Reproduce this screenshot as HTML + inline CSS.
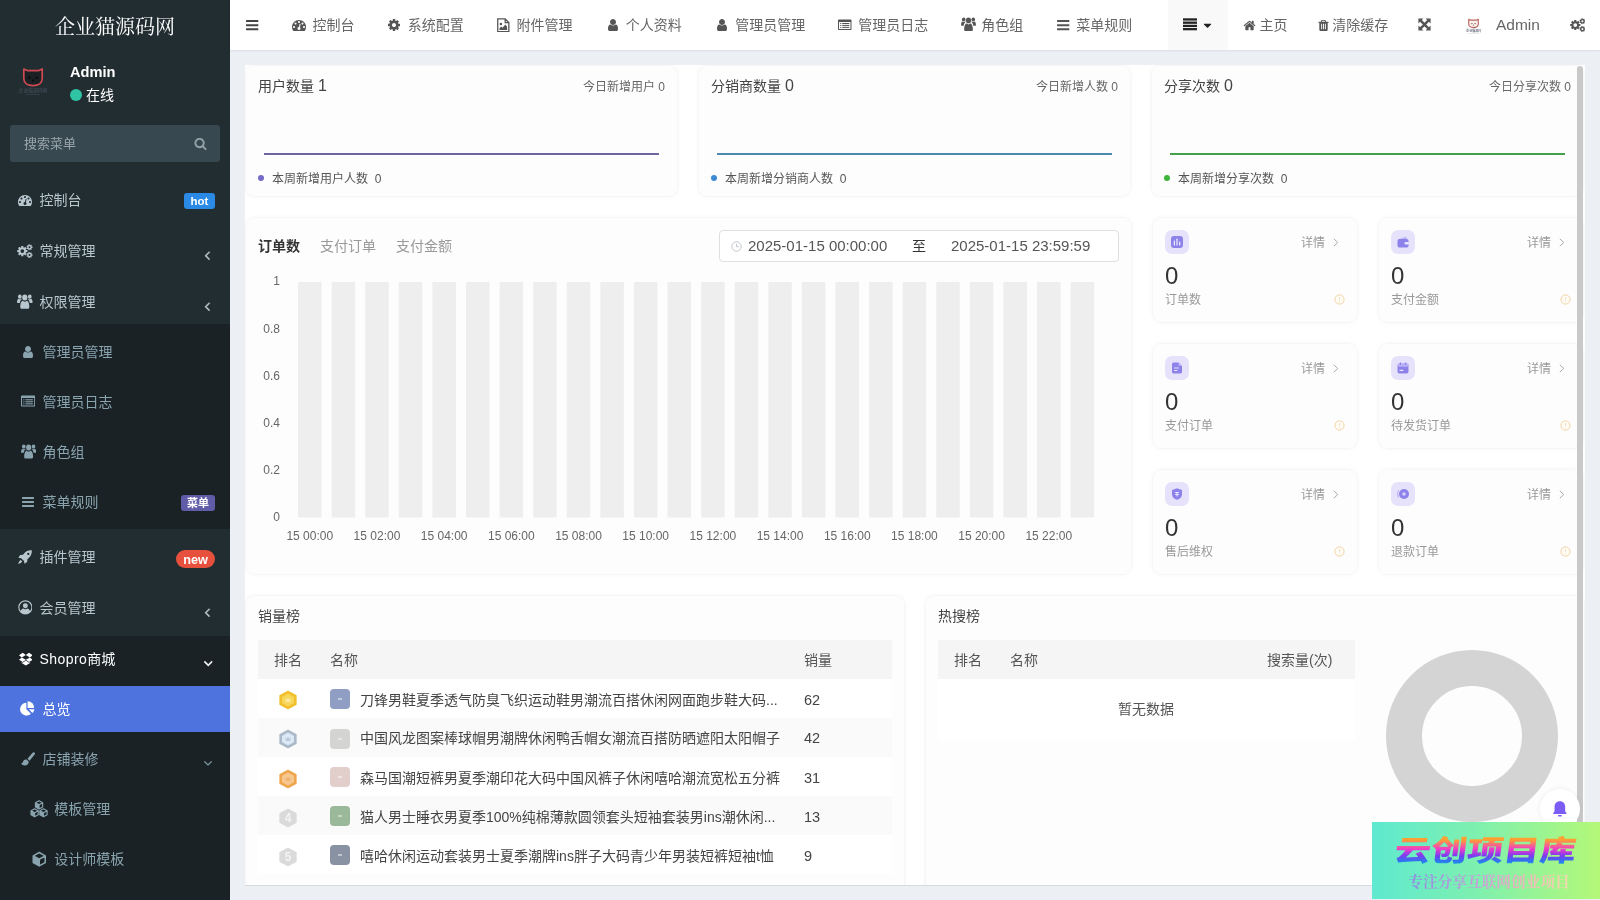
<!DOCTYPE html>
<html lang="zh-CN">
<head>
<meta charset="utf-8">
<title>企业猫源码网</title>
<style>
*{box-sizing:border-box;margin:0;padding:0}
html,body{width:1600px;height:900px;overflow:hidden}
body{font-family:"Liberation Sans","Noto Sans CJK SC",sans-serif;font-size:14px;color:#444;background:#ecf0f5;position:relative}
svg{display:block}
#root{position:absolute;left:0;top:0;width:1600px;height:900px;will-change:transform;overflow:hidden}
.abs{position:absolute}
/* ---------- sidebar ---------- */
#side{position:absolute;left:0;top:0;width:230px;height:900px;background:#222d32;overflow:hidden}
#logo{position:absolute;left:0;top:0;width:230px;height:50px;line-height:50px;text-align:center;color:#fff;font-size:20px;font-family:"Liberation Serif","Noto Serif CJK SC",serif;font-weight:400;letter-spacing:0;padding-top:1.5px}
#uname{position:absolute;left:70px;top:62px;font-weight:700;color:#fff;font-size:14.6px;line-height:20px}
#ustat{position:absolute;left:70px;top:85px;color:#fff;font-size:14px;line-height:20px}
#ustat i{display:inline-block;width:12px;height:12px;border-radius:50%;background:#2ec4a4;margin-right:4px;vertical-align:-1px}
#search{position:absolute;left:10px;top:125px;width:210px;height:37px;border-radius:3px;background:#374850;color:#9aa5ab;font-size:13px;line-height:37px;padding-left:14px}
.mi{position:absolute;left:0;width:230px;height:44px;line-height:44px;color:#d5dee3;font-size:14px;white-space:nowrap}
.mi .t{position:absolute;left:39px;top:0}
.mi svg{position:absolute}
.mi.sub{color:#8aa4af;height:46px;line-height:46px}
.mi.sub .t{left:42px}
.mi.sub2 .t{left:54px}
.mi.act{color:#fff}
.badge{position:absolute;height:16px;line-height:16px;font-size:11px;font-weight:700;color:#fff;padding:0 5px;border-radius:3px}
/* ---------- header ---------- */
#head{position:absolute;left:230px;top:0;width:1370px;height:50px;background:#fff;box-shadow:0 1px 2px rgba(0,0,0,.08)}
.nv{position:absolute;top:0;height:50px;line-height:50px;font-size:14px;color:#666;white-space:nowrap}
.nv svg{position:absolute}
/* ---------- cards ---------- */
#frame{position:absolute;left:245px;top:65px;width:1340px;height:820px;background:#fff;overflow:hidden;box-shadow:0 1px 0 rgba(0,0,0,.09)}
.card{position:absolute;background:#fdfdfd;border-radius:8px;box-shadow:0 0 5px rgba(0,0,0,.06),0 0 0 1px rgba(0,0,0,.012)}
.ct{position:absolute;white-space:nowrap}
</style>
</head>
<body>
<div id="root">
<div id="side">
<div id="logo">企业猫源码网</div>
<svg class="abs" style="left:15px;top:62px" width="36" height="36" viewBox="0 0 36 36">
<path d="M8.8 7 L12.2 8.6 H23.8 L27.2 7 V16.5 C27.2 21 23.3 23.6 18 23.6 S8.8 21 8.8 16.5 Z" fill="#1a2024" stroke="#cf4953" stroke-width="1.7" stroke-linejoin="round"/>
<circle cx="14.3" cy="15.8" r="1.3" fill="#0a0e10"/><circle cx="21.7" cy="15.8" r="1.3" fill="#0a0e10"/><circle cx="18" cy="18.6" r="1.1" fill="#0a0e10"/>
<text x="18" y="30" font-size="4.8" fill="#3c454f" text-anchor="middle" font-weight="700" font-family="Liberation Sans,Noto Sans CJK SC,sans-serif">企业猫源码网</text>
<rect x="11" y="32" width="14" height="1" fill="#343d46"/>
</svg>
<div id="uname">Admin</div>
<div id="ustat"><i></i>在线</div>
<div id="search">搜索菜单<svg style="position:absolute;left:184px;top:12px;color:#97a2a8;" width="13" height="13" viewBox="0 0 1792 1792" fill="currentColor" ><path d="M1216 832q0-185-131.5-316.5t-316.5-131.5-316.5 131.5-131.5 316.5 131.5 316.5 316.5 131.5 316.5-131.5 131.5-316.5zm512 832q0 52-38 90t-90 38q-54 0-90-38l-343-342q-179 124-399 124-143 0-273.5-55.5t-225-150-150-225-55.5-273.5 55.5-273.5 150-225 225-150 273.5-55.5 273.5 55.5 225 150 150 225 55.5 273.5q0 220-124 399l343 343q37 37 37 90z"/></svg></div>
<div class="abs" style="left:0;top:324px;width:230px;height:204.5px;background:#1a2226"></div>
<div class="abs" style="left:0;top:636px;width:230px;height:264px;background:#1a2226"></div>
<div class="abs" style="left:0;top:686px;width:230px;height:46px;background:#4e73df"></div>
<svg style="position:absolute;left:17.9px;top:192.7px;color:#b8c7ce;" width="14" height="14" viewBox="0 0 1792 1792" fill="currentColor" ><path d="M384 1152q0-53-37.5-90.5t-90.5-37.5-90.5 37.5-37.5 90.5 37.5 90.5 90.5 37.5 90.5-37.5 37.5-90.5zm192-448q0-53-37.5-90.5t-90.5-37.5-90.5 37.5-37.5 90.5 37.5 90.5 90.5 37.5 90.5-37.5 37.5-90.5zm428 481l101-382q6-26-7.5-48.5t-38.5-29.5-48 6.5-30 39.5l-101 382q-60 5-107 43.5t-63 98.5q-20 77 20 146t117 89 146-20 89-117q16-60-6-117t-72-91zm660-33q0-53-37.5-90.5t-90.5-37.5-90.5 37.5-37.5 90.5 37.5 90.5 90.5 37.5 90.5-37.5 37.5-90.5zm-640-640q0-53-37.5-90.5t-90.5-37.5-90.5 37.5-37.5 90.5 37.5 90.5 90.5 37.5 90.5-37.5 37.5-90.5zm448 192q0-53-37.5-90.5t-90.5-37.5-90.5 37.5-37.5 90.5 37.5 90.5 90.5 37.5 90.5-37.5 37.5-90.5zm320 448q0 261-141 483-19 29-54 29h-1402q-35 0-54-29-141-221-141-483 0-182 71-348t191-286 286-191 348-71 348 71 286 191 191 286 71 348z"/></svg>
<div class="ct" style="left:39.5px;top:190.3px;line-height:20px;font-size:14px;color:#b8c7ce">控制台</div>
<span class="badge" style="left:184px;top:192.5px;width:31px;text-align:center;padding:0;height:16.5px;line-height:16px;font-size:11.5px;background:#2a8ae6">hot</span>
<svg style="position:absolute;left:17.05px;top:242.77px;color:#b8c7ce;" width="15.77" height="15.77" viewBox="0 0 16 16" fill="currentColor" ><path fill-rule="evenodd" d="M9.13 7.07 L10.6 7.17 L10.6 9.23 L9.13 9.33 L8.84 10.04 L9.81 11.14 L8.34 12.61 L7.24 11.64 L6.53 11.93 L6.43 13.4 L4.37 13.4 L4.27 11.93 L3.56 11.64 L2.46 12.61 L0.99 11.14 L1.96 10.04 L1.67 9.33 L0.2 9.23 L0.2 7.17 L1.67 7.07 L1.96 6.36 L0.99 5.26 L2.46 3.79 L3.56 4.76 L4.27 4.47 L4.37 3 L6.43 3 L6.53 4.47 L7.24 4.76 L8.34 3.79 L9.81 5.26 L8.84 6.36Z M7.3 8.2 A1.9 1.9 0 1 0 3.5 8.2 A1.9 1.9 0 1 0 7.3 8.2Z M14.78 3.57 L15.72 3.61 L15.72 4.99 L14.78 5.03 L14.56 5.47 L15.12 6.23 L14.05 7.09 L13.43 6.38 L12.95 6.49 L12.7 7.4 L11.35 7.09 L11.53 6.16 L11.14 5.86 L10.28 6.23 L9.68 4.99 L10.51 4.55 L10.51 4.05 L9.68 3.61 L10.28 2.37 L11.14 2.74 L11.53 2.44 L11.35 1.51 L12.7 1.2 L12.95 2.11 L13.43 2.22 L14.05 1.51 L15.12 2.37 L14.56 3.13Z M13.7 4.3 A1 1 0 1 0 11.7 4.3 A1 1 0 1 0 13.7 4.3Z M14.78 11.47 L15.72 11.51 L15.72 12.89 L14.78 12.93 L14.56 13.37 L15.12 14.13 L14.05 14.99 L13.43 14.28 L12.95 14.39 L12.7 15.3 L11.35 14.99 L11.53 14.06 L11.14 13.76 L10.28 14.13 L9.68 12.89 L10.51 12.45 L10.51 11.95 L9.68 11.51 L10.28 10.27 L11.14 10.64 L11.53 10.34 L11.35 9.41 L12.7 9.1 L12.95 10.01 L13.43 10.12 L14.05 9.41 L15.12 10.27 L14.56 11.03Z M13.7 12.2 A1 1 0 1 0 11.7 12.2 A1 1 0 1 0 13.7 12.2Z"/></svg>
<div class="ct" style="left:39.5px;top:241.3px;line-height:20px;font-size:14px;color:#b8c7ce">常规管理</div>
<svg style="position:absolute;left:200.32px;top:247.73px;color:#b8c7ce;" width="14.5" height="14.5" viewBox="0 0 1792 1792" fill="currentColor" stroke="currentColor" stroke-width="70"><path d="M1203 544q0 13-10 23l-393 393 393 393q10 10 10 23t-10 23l-50 50q-10 10-23 10t-23-10l-466-466q-10-10-10-23t10-23l466-466q10-10 23-10t23 10l50 50q10 10 10 23z"/></svg>
<svg style="position:absolute;left:17.2px;top:293.01px;color:#b8c7ce;" width="15.6" height="15.6" viewBox="0 0 16 16" fill="currentColor" ><g transform="translate(0,-1.2) scale(1,1.13)"><circle cx="8" cy="5.2" r="2.7"/><path d="M3.4 14.3c-.3-3.8 1.3-6.1 2.7-6.1.5.5 1.2.800 1.9.800s1.4-.3 1.9-.8c1.4 0 3 2.3 2.7 6.1-.1.7-.6 1.1-1.3 1.1H4.7c-.7 0-1.2-.4-1.3-1.1z"/><circle cx="2.9" cy="4.4" r="1.9"/><circle cx="13.1" cy="4.4" r="1.9"/><path d="M0 9.8c0-2 .8-3.5 1.7-3.5.4.3.8.5 1.3.5.5 0 1-.2 1.4-.5.2 0 .4.1.6.3-1 .7-1.8 1.9-2.1 3.6H.9C.4 10.2 0 10.1 0 9.8z"/><path d="M16 9.8c0-2-.8-3.5-1.7-3.5-.4.3-.8.5-1.3.5-.5 0-1-.2-1.4-.5-.2 0-.4.1-.6.3 1 .7 1.8 1.9 2.1 3.6h2c.5 0 .9-.1.9-.4z"/></g></svg>
<div class="ct" style="left:39.5px;top:292px;line-height:20px;font-size:14px;color:#b8c7ce">权限管理</div>
<svg style="position:absolute;left:200.32px;top:298.73px;color:#b8c7ce;" width="14.5" height="14.5" viewBox="0 0 1792 1792" fill="currentColor" stroke="currentColor" stroke-width="70"><path d="M1203 544q0 13-10 23l-393 393 393 393q10 10 10 23t-10 23l-50 50q-10 10-23 10t-23-10l-466-466q-10-10-10-23t10-23l466-466q10-10 23-10t23 10l50 50q10 10 10 23z"/></svg>
<svg style="position:absolute;left:21.1px;top:345px;color:#8aa4af;" width="14" height="14" viewBox="0 0 1792 1792" fill="currentColor" ><path d="M1536 1399q0 109-62.5 187t-150.5 78h-854q-88 0-150.5-78t-62.5-187q0-85 8.5-160.5t31.5-152 58.5-131 94-89 134.5-34.5q131 128 313 128t313-128q76 0 134.5 34.5t94 89 58.5 131 31.5 152 8.5 160.5zm-256-887q0 159-112.5 271.5t-271.5 112.5-271.5-112.5-112.5-271.5 112.5-271.5 271.5-112.5 271.5 112.5 112.5 271.5z"/></svg>
<div class="ct" style="left:42.5px;top:342.3px;line-height:20px;font-size:14px;color:#8aa4af">管理员管理</div>
<svg style="position:absolute;left:20.8px;top:394.4px;color:#8aa4af;" width="14.2" height="14.2" viewBox="0 0 16 16" fill="currentColor" ><path fill-rule="evenodd" d="M1.2 1.8h13.6c.7 0 1.2.5 1.2 1.2v10c0 .7-.5 1.2-1.2 1.2H1.2C.5 14.2 0 13.7 0 13V3c0-.7.5-1.2 1.2-1.2zM1.2 4.6V13h13.6V4.6z"/><rect x="2.6" y="5.9" width="1.3" height="1.2"/><rect x="5" y="5.9" width="8.4" height="1.2"/><rect x="2.6" y="8.2" width="1.3" height="1.2"/><rect x="5" y="8.2" width="8.4" height="1.2"/><rect x="2.6" y="10.5" width="1.3" height="1.2"/><rect x="5" y="10.5" width="8.4" height="1.2"/></svg>
<div class="ct" style="left:42.5px;top:392.3px;line-height:20px;font-size:14px;color:#8aa4af">管理员日志</div>
<svg style="position:absolute;left:20.5px;top:443.38px;color:#8aa4af;" width="15.3" height="15.3" viewBox="0 0 16 16" fill="currentColor" ><g transform="translate(0,-1.2) scale(1,1.13)"><circle cx="8" cy="5.2" r="2.7"/><path d="M3.4 14.3c-.3-3.8 1.3-6.1 2.7-6.1.5.5 1.2.800 1.9.800s1.4-.3 1.9-.8c1.4 0 3 2.3 2.7 6.1-.1.7-.6 1.1-1.3 1.1H4.7c-.7 0-1.2-.4-1.3-1.1z"/><circle cx="2.9" cy="4.4" r="1.9"/><circle cx="13.1" cy="4.4" r="1.9"/><path d="M0 9.8c0-2 .8-3.5 1.7-3.5.4.3.8.5 1.3.5.5 0 1-.2 1.4-.5.2 0 .4.1.6.3-1 .7-1.8 1.9-2.1 3.6H.9C.4 10.2 0 10.1 0 9.8z"/><path d="M16 9.8c0-2-.8-3.5-1.7-3.5-.4.3-.8.5-1.3.5-.5 0-1-.2-1.4-.5-.2 0-.4.1-.6.3 1 .7 1.8 1.9 2.1 3.6h2c.5 0 .9-.1.9-.4z"/></g></svg>
<div class="ct" style="left:42.5px;top:442.3px;line-height:20px;font-size:14px;color:#8aa4af">角色组</div>
<svg style="position:absolute;left:20.9px;top:495px;color:#8aa4af;" width="14" height="14" viewBox="0 0 1792 1792" fill="currentColor" ><path d="M1664 1344v128q0 26-19 45t-45 19h-1408q-26 0-45-19t-19-45v-128q0-26 19-45t45-19h1408q26 0 45 19t19 45zm0-512v128q0 26-19 45t-45 19h-1408q-26 0-45-19t-19-45v-128q0-26 19-45t45-19h1408q26 0 45 19t19 45zm0-512v128q0 26-19 45t-45 19h-1408q-26 0-45-19t-19-45v-128q0-26 19-45t45-19h1408q26 0 45 19t19 45z"/></svg>
<div class="ct" style="left:42.5px;top:492.3px;line-height:20px;font-size:14px;color:#8aa4af">菜单规则</div>
<span class="badge" style="left:181px;top:495px;width:34px;text-align:center;padding:0;height:16px;line-height:16px;font-size:11px;background:#605ca8">菜单</span>
<svg style="position:absolute;left:18.32px;top:550.07px;color:#b8c7ce;" width="14.2" height="14.2" viewBox="0 0 16 16" fill="currentColor" ><path fill-rule="evenodd" d="M15.6.4c.3 4.2-1.4 7.3-5 9.9l-.300 3.3-3 2-.5-3.1-3.3-3.3L.400 8.7l2-3 3.3-.3C8.3 1.8 11.4.100 15.6.4zM12.9 4.4a1.3 1.3 0 1 0-2.6 0 1.3 1.3 0 0 0 2.6 0z"/><path d="M3.1 11.3c.6.4 1.2 1 1.6 1.6-.7 1.3-2.3 2.2-4.5 2.9.7-2.2 1.6-3.8 2.9-4.5z"/></svg>
<div class="ct" style="left:39.5px;top:547.3px;line-height:20px;font-size:14px;color:#b8c7ce">插件管理</div>
<span class="badge" style="left:176px;top:549.5px;width:39px;text-align:center;padding:0;height:18.5px;line-height:20.3px;font-size:12.7px;border-radius:9px;background:#e8503e">new</span>
<svg style="position:absolute;left:17.53px;top:600.37px;color:#b8c7ce;" width="14.75" height="14.75" viewBox="0 0 16 16" fill="currentColor" ><path fill-rule="evenodd" d="M8 .3a7.7 7.7 0 1 0 0 15.4A7.7 7.7 0 0 0 8 .3zm0 1.3a6.4 6.4 0 0 1 5 10.4c-.6-1.7-1.5-2.7-2.7-2.9-.6.6-1.4.9-2.3.9-.9 0-1.7-.3-2.3-.9-1.2.2-2.1 1.2-2.7 2.9A6.4 6.4 0 0 1 8 1.6zM8 3.5a2.7 2.7 0 1 0 0 5.4 2.7 2.7 0 0 0 0-5.4z"/></svg>
<div class="ct" style="left:39.5px;top:598.3px;line-height:20px;font-size:14px;color:#b8c7ce">会员管理</div>
<svg style="position:absolute;left:200.32px;top:604.73px;color:#b8c7ce;" width="14.5" height="14.5" viewBox="0 0 1792 1792" fill="currentColor" stroke="currentColor" stroke-width="70"><path d="M1203 544q0 13-10 23l-393 393 393 393q10 10 10 23t-10 23l-50 50q-10 10-23 10t-23-10l-466-466q-10-10-10-23t10-23l466-466q10-10 23-10t23 10l50 50q10 10 10 23z"/></svg>
<svg style="position:absolute;left:18.5px;top:652.14px;color:#fff;" width="13.7" height="13.7" viewBox="0 0 16 16" fill="currentColor" ><path d="M4.3.9L0 3.7l3.3 2.6L8 3.5zM11.7.9L16 3.7l-3.3 2.6L8 3.5zM0 9l4.3 2.8L8 9.1 3.3 6.3zM16 9l-4.3 2.8L8 9.1l4.7-2.8zM8 9.9l-3.7 2.8-1.3-.8v1L8 15.7l5-2.8v-1l-1.3.8z"/></svg>
<div class="ct" style="left:39.5px;top:649.3px;line-height:20px;font-size:14px;color:#fff"><span style="letter-spacing:.45px">Shopro</span>商城</div>
<svg style="position:absolute;left:200.75px;top:655.86px;color:#fff;" width="14.5" height="14.5" viewBox="0 0 1792 1792" fill="currentColor" stroke="currentColor" stroke-width="70"><path d="M1395 736q0 13-10 23l-466 466q-10 10-23 10t-23-10l-466-466q-10-10-10-23t10-23l50-50q10-10 23-10t23 10l393 393 393-393q10-10 23-10t23 10l50 50q10 10 10 23z"/></svg>
<svg style="position:absolute;left:20.41px;top:701.28px;color:#fff;" width="14.57" height="14.57" viewBox="0 0 16 16" fill="currentColor" ><path d="M7 2v7l5 5A7 7 0 1 1 7 2z"/><path d="M8.4.4A7.1 7.1 0 0 1 15.6 7.6H8.4z"/><path d="M15.8 9a7 7 0 0 1-2 4.2L9.6 9z"/></svg>
<div class="ct" style="left:42.5px;top:699.3px;line-height:20px;font-size:14px;color:#fff">总览</div>
<svg style="position:absolute;left:21px;top:752.16px;color:#8aa4af;" width="14.18" height="14.18" viewBox="0 0 16 16" fill="currentColor" ><path d="M15.3.6c.7.6.600 1.5.1 2.2L9.7 9.8 7.3 7.7 13.1.900c.6-.7 1.5-.9 2.2-.3z"/><path d="M6.3 8.6l2.3 2c.300 2.3-1.3 4.6-4.3 4.6-1.7 0-3.2-.7-4.3-2.2 1.4-.2 2.1-1 2.4-2.2.4-1.6 1.8-2.5 3.9-2.2z"/></svg>
<div class="ct" style="left:42.5px;top:749.3px;line-height:20px;font-size:14px;color:#8aa4af">店铺装修</div>
<svg style="position:absolute;left:201px;top:756.12px;color:#8aa4af;" width="14" height="14" viewBox="0 0 1792 1792" fill="currentColor" stroke="currentColor" stroke-width="20"><path d="M1395 736q0 13-10 23l-466 466q-10 10-23 10t-23-10l-466-466q-10-10-10-23t10-23l50-50q10-10 23-10t23 10l393 393 393-393q10-10 23-10t23 10l50 50q10 10 10 23z"/></svg>
<svg style="position:absolute;left:30.2px;top:800.37px;color:#8aa4af;" width="18.11" height="18.11" viewBox="0 0 16 16" fill="currentColor" ><path d="M4.8 2.51 L8 4.3 L8 7.88 L4.8 6.09Z"/><path d="M8 0.72 L11.2 2.51 L11.2 6.09 L8 7.88 L4.8 6.09 L4.8 2.51Z M4.8 2.51 L8 4.3 L11.2 2.51 M8 4.3 L8 7.88" fill="none" stroke="currentColor" stroke-width="1" stroke-linejoin="round"/><path d="M0.9 9.51 L4.1 11.3 L4.1 14.88 L0.9 13.09Z"/><path d="M4.1 7.72 L7.3 9.51 L7.3 13.09 L4.1 14.88 L0.9 13.09 L0.9 9.51Z M0.9 9.51 L4.1 11.3 L7.3 9.51 M4.1 11.3 L4.1 14.88" fill="none" stroke="currentColor" stroke-width="1" stroke-linejoin="round"/><path d="M8.7 9.51 L11.9 11.3 L11.9 14.88 L8.7 13.09Z"/><path d="M11.9 7.72 L15.1 9.51 L15.1 13.09 L11.9 14.88 L8.7 13.09 L8.7 9.51Z M8.7 9.51 L11.9 11.3 L15.1 9.51 M11.9 11.3 L11.9 14.88" fill="none" stroke="currentColor" stroke-width="1" stroke-linejoin="round"/></svg>
<div class="ct" style="left:54.3px;top:799.3px;line-height:20px;font-size:14px;color:#8aa4af">模板管理</div>
<svg style="position:absolute;left:31.01px;top:851.16px;color:#8aa4af;" width="16.49" height="16.49" viewBox="0 0 16 16" fill="currentColor" ><path d="M2.2 4.75 L8 8 L8 14.5 L2.2 11.25Z"/><path d="M8 1.5 L13.8 4.75 L13.8 11.25 L8 14.5 L2.2 11.25 L2.2 4.75Z M2.2 4.75 L8 8 L13.8 4.75 M8 8 L8 14.5" fill="none" stroke="currentColor" stroke-width="1.5" stroke-linejoin="round"/></svg>
<div class="ct" style="left:54.3px;top:849.3px;line-height:20px;font-size:14px;color:#8aa4af">设计师模板</div>
</div>
<div id="head">
<svg style="position:absolute;left:15.2px;top:17.8px;color:#444;" width="14.4" height="14.4" viewBox="0 0 1792 1792" fill="currentColor" ><path d="M1664 1344v128q0 26-19 45t-45 19h-1408q-26 0-45-19t-19-45v-128q0-26 19-45t45-19h1408q26 0 45 19t19 45zm0-512v128q0 26-19 45t-45 19h-1408q-26 0-45-19t-19-45v-128q0-26 19-45t45-19h1408q26 0 45 19t19 45zm0-512v128q0 26-19 45t-45 19h-1408q-26 0-45-19t-19-45v-128q0-26 19-45t45-19h1408q26 0 45 19t19 45z"/></svg>
<svg style="position:absolute;left:62px;top:17.8px;color:#555;" width="14" height="14" viewBox="0 0 1792 1792" fill="currentColor" ><path d="M384 1152q0-53-37.5-90.5t-90.5-37.5-90.5 37.5-37.5 90.5 37.5 90.5 90.5 37.5 90.5-37.5 37.5-90.5zm192-448q0-53-37.5-90.5t-90.5-37.5-90.5 37.5-37.5 90.5 37.5 90.5 90.5 37.5 90.5-37.5 37.5-90.5zm428 481l101-382q6-26-7.5-48.5t-38.5-29.5-48 6.5-30 39.5l-101 382q-60 5-107 43.5t-63 98.5q-20 77 20 146t117 89 146-20 89-117q16-60-6-117t-72-91zm660-33q0-53-37.5-90.5t-90.5-37.5-90.5 37.5-37.5 90.5 37.5 90.5 90.5 37.5 90.5-37.5 37.5-90.5zm-640-640q0-53-37.5-90.5t-90.5-37.5-90.5 37.5-37.5 90.5 37.5 90.5 90.5 37.5 90.5-37.5 37.5-90.5zm448 192q0-53-37.5-90.5t-90.5-37.5-90.5 37.5-37.5 90.5 37.5 90.5 90.5 37.5 90.5-37.5 37.5-90.5zm320 448q0 261-141 483-19 29-54 29h-1402q-35 0-54-29-141-221-141-483 0-182 71-348t191-286 286-191 348-71 348 71 286 191 191 286 71 348z"/></svg>
<div class="ct" style="left:82.5px;top:15px;line-height:20px;font-size:14px;color:#666">控制台</div>
<svg style="position:absolute;left:157.3px;top:18px;color:#555;" width="14" height="14" viewBox="0 0 1792 1792" fill="currentColor" ><path d="M1152 896q0-106-75-181t-181-75-181 75-75 181 75 181 181 75 181-75 75-181zm512-109v222q0 12-8 23t-20 13l-185 28q-19 54-39 91 35 50 107 138 10 12 10 25t-9 23q-27 37-99 108t-94 71q-12 0-26-9l-138-108q-44 23-91 38-16 136-29 186-7 28-36 28h-222q-14 0-24.5-8.5t-11.5-21.5l-28-184q-49-16-90-37l-141 107q-10 9-25 9-14 0-25-11-126-114-165-168-7-10-7-23 0-12 8-23 15-21 51-66.5t54-70.5q-27-50-41-99l-183-27q-13-2-21-12.5t-8-23.5v-222q0-12 8-23t19-13l186-28q14-46 39-92-40-57-107-138-10-12-10-24 0-10 9-23 26-36 98.5-107.5t94.5-71.5q13 0 26 10l138 107q44-23 91-38 16-136 29-186 7-28 36-28h222q14 0 24.5 8.5t11.5 21.5l28 184q49 16 90 37l142-107q9-9 24-9 13 0 25 10 129 119 165 170 7 8 7 22 0 12-8 23-15 21-51 66.5t-54 70.5q26 50 41 98l183 28q13 2 21 12.5t8 23.5z"/></svg>
<div class="ct" style="left:177.8px;top:15px;line-height:20px;font-size:14px;color:#666">系统配置</div>
<svg style="position:absolute;left:265.91px;top:17.61px;color:#555;" width="14.59" height="14.59" viewBox="0 0 16 16" fill="currentColor" ><path fill="none" stroke="currentColor" stroke-width="1.4" d="M1.9 1h8.2l4 4v10H1.9z M10.1 1v4h4"/><circle cx="5.4" cy="6.6" r="1.4"/><path d="M3.8 13.2v-2l2-2 1.4 1.4 3-3.4 2 2.3v3.7z"/></svg>
<div class="ct" style="left:286.6px;top:15px;line-height:20px;font-size:14px;color:#666">附件管理</div>
<svg style="position:absolute;left:375.75px;top:18.1px;color:#555;" width="14" height="14" viewBox="0 0 1792 1792" fill="currentColor" ><path d="M1536 1399q0 109-62.5 187t-150.5 78h-854q-88 0-150.5-78t-62.5-187q0-85 8.5-160.5t31.5-152 58.5-131 94-89 134.5-34.5q131 128 313 128t313-128q76 0 134.5 34.5t94 89 58.5 131 31.5 152 8.5 160.5zm-256-887q0 159-112.5 271.5t-271.5 112.5-271.5-112.5-112.5-271.5 112.5-271.5 271.5-112.5 271.5 112.5 112.5 271.5z"/></svg>
<div class="ct" style="left:395.79999999999995px;top:15px;line-height:20px;font-size:14px;color:#666">个人资料</div>
<svg style="position:absolute;left:484.95px;top:18.1px;color:#555;" width="14" height="14" viewBox="0 0 1792 1792" fill="currentColor" ><path d="M1536 1399q0 109-62.5 187t-150.5 78h-854q-88 0-150.5-78t-62.5-187q0-85 8.5-160.5t31.5-152 58.5-131 94-89 134.5-34.5q131 128 313 128t313-128q76 0 134.5 34.5t94 89 58.5 131 31.5 152 8.5 160.5zm-256-887q0 159-112.5 271.5t-271.5 112.5-271.5-112.5-112.5-271.5 112.5-271.5 271.5-112.5 271.5 112.5 112.5 271.5z"/></svg>
<div class="ct" style="left:505.29999999999995px;top:15px;line-height:20px;font-size:14px;color:#666">管理员管理</div>
<svg style="position:absolute;left:608.15px;top:17.85px;color:#555;" width="13.5" height="13.5" viewBox="0 0 16 16" fill="currentColor" ><path fill-rule="evenodd" d="M1.2 1.8h13.6c.7 0 1.2.5 1.2 1.2v10c0 .7-.5 1.2-1.2 1.2H1.2C.5 14.2 0 13.7 0 13V3c0-.7.5-1.2 1.2-1.2zM1.2 4.6V13h13.6V4.6z"/><rect x="2.6" y="5.9" width="1.3" height="1.2"/><rect x="5" y="5.9" width="8.4" height="1.2"/><rect x="2.6" y="8.2" width="1.3" height="1.2"/><rect x="5" y="8.2" width="8.4" height="1.2"/><rect x="2.6" y="10.5" width="1.3" height="1.2"/><rect x="5" y="10.5" width="8.4" height="1.2"/></svg>
<div class="ct" style="left:628.2px;top:15px;line-height:20px;font-size:14px;color:#666">管理员日志</div>
<svg style="position:absolute;left:730.8px;top:16.49px;color:#555;" width="15" height="15" viewBox="0 0 16 16" fill="currentColor" ><g transform="translate(0,-1.2) scale(1,1.13)"><circle cx="8" cy="5.2" r="2.7"/><path d="M3.4 14.3c-.3-3.8 1.3-6.1 2.7-6.1.5.5 1.2.800 1.9.800s1.4-.3 1.9-.8c1.4 0 3 2.3 2.7 6.1-.1.7-.6 1.1-1.3 1.1H4.7c-.7 0-1.2-.4-1.3-1.1z"/><circle cx="2.9" cy="4.4" r="1.9"/><circle cx="13.1" cy="4.4" r="1.9"/><path d="M0 9.8c0-2 .8-3.5 1.7-3.5.4.3.8.5 1.3.5.5 0 1-.2 1.4-.5.2 0 .4.1.6.3-1 .7-1.8 1.9-2.1 3.6H.9C.4 10.2 0 10.1 0 9.8z"/><path d="M16 9.8c0-2-.8-3.5-1.7-3.5-.4.3-.8.5-1.3.5-.5 0-1-.2-1.4-.5-.2 0-.4.1-.6.3 1 .7 1.8 1.9 2.1 3.6h2c.5 0 .9-.1.9-.4z"/></g></svg>
<div class="ct" style="left:751.2px;top:15px;line-height:20px;font-size:14px;color:#666">角色组</div>
<svg style="position:absolute;left:825.75px;top:17.8px;color:#555;" width="14.4" height="14.4" viewBox="0 0 1792 1792" fill="currentColor" ><path d="M1664 1344v128q0 26-19 45t-45 19h-1408q-26 0-45-19t-19-45v-128q0-26 19-45t45-19h1408q26 0 45 19t19 45zm0-512v128q0 26-19 45t-45 19h-1408q-26 0-45-19t-19-45v-128q0-26 19-45t45-19h1408q26 0 45 19t19 45zm0-512v128q0 26-19 45t-45 19h-1408q-26 0-45-19t-19-45v-128q0-26 19-45t45-19h1408q26 0 45 19t19 45z"/></svg>
<div class="ct" style="left:846.3px;top:15px;line-height:20px;font-size:14px;color:#666">菜单规则</div>
<div class="abs" style="left:938px;top:0;width:60px;height:50px;background:#f9f9f9"></div>
<svg style="position:absolute;left:953.2px;top:17.09px;color:#222;" width="14" height="14" viewBox="0 0 16 16" fill="currentColor" ><rect x="0" y="1.5" width="16" height="2.6"/><rect x="0" y="5.2" width="16" height="2.6"/><rect x="0" y="8.9" width="16" height="2.6"/><rect x="0" y="12.6" width="16" height="2.6"/></svg>
<svg style="position:absolute;left:970.75px;top:19.37px;color:#222;" width="13" height="13" viewBox="0 0 1792 1792" fill="currentColor" ><path d="M1408 704q0 26-19 45l-448 448q-19 19-45 19t-45-19l-448-448q-19-19-19-45t19-45 45-19h896q26 0 45 19t19 45z"/></svg>
<svg style="position:absolute;left:1012.5px;top:18.51px;color:#555;" width="13" height="13" viewBox="0 0 1792 1792" fill="currentColor" ><path d="M1472 992v480q0 26-19 45t-45 19h-384v-384h-256v384h-384q-26 0-45-19t-19-45v-480q0-1 .5-3t.5-3l575-474 575 474q1 2 1 6zm223-69l-62 74q-8 9-21 11h-3q-13 0-21-7l-692-577-692 577q-12 8-24 7-13-2-21-11l-62-74q-8-10-7-23.5t11-21.5l719-599q32-26 76-26t76 26l244 204v-195q0-14 9-23t23-9h192q14 0 23 9t9 23v408l219 182q10 8 11 21.5t-7 23.5z"/></svg>
<div class="ct" style="left:1029.5px;top:15px;line-height:20px;font-size:14px;color:#666">主页</div>
<svg style="position:absolute;left:1086.6px;top:18.5px;color:#555;" width="13" height="13" viewBox="0 0 1792 1792" fill="currentColor" ><path d="M704 1376v-704q0-14-9-23t-23-9h-64q-14 0-23 9t-9 23v704q0 14 9 23t23 9h64q14 0 23-9t9-23zm256 0v-704q0-14-9-23t-23-9h-64q-14 0-23 9t-9 23v704q0 14 9 23t23 9h64q14 0 23-9t9-23zm256 0v-704q0-14-9-23t-23-9h-64q-14 0-23 9t-9 23v704q0 14 9 23t23 9h64q14 0 23-9t9-23zm-544-992h448l-48-117q-7-9-17-11h-317q-10 2-17 11zm928 32v64q0 14-9 23t-23 9h-96v948q0 83-47 143.5t-113 60.5h-832q-66 0-113-58.5t-47-141.5v-952h-96q-14 0-23-9t-9-23v-64q0-14 9-23t23-9h309l70-167q15-37 54-63t79-26h320q40 0 79 26t54 63l70 167h309q14 0 23 9t9 23z"/></svg>
<div class="ct" style="left:1102.3px;top:15px;line-height:20px;font-size:14px;color:#666">清除缓存</div>
<svg style="position:absolute;left:1188.39px;top:18.49px;color:#555;" width="13.01" height="13.01" viewBox="0 0 16 16" fill="currentColor" ><path d="M.5.5h6.2L.5 6.7zM15.5.500v6.2L9.3.5zM.5 15.5V9.3l6.2 6.2zM15.5 15.5H9.3l6.2-6.2z"/><path d="M3 3l10 10M13 3L3 13" stroke="currentColor" stroke-width="3.1" fill="none"/></svg>
<svg class="abs" style="left:1234px;top:16px" width="19" height="19" viewBox="0 0 19 19">
<path d="M4.7 3.3 L6.5 4.1 H12.5 L14.3 3.3 V8 C14.3 10.3 12.2 11.6 9.5 11.6 S4.7 10.3 4.7 8 Z" fill="#fdefeb" stroke="#b96660" stroke-width="1.1" stroke-linejoin="round"/>
<circle cx="7.9" cy="7.6" r=".7" fill="#7a4a48"/><circle cx="11.1" cy="7.6" r=".7" fill="#7a4a48"/><circle cx="9.5" cy="9" r=".6" fill="#7a4a48"/>
<text x="9.7" y="16.1" font-size="3" font-weight="700" fill="#6f7381" text-anchor="middle" font-family="Liberation Sans,Noto Sans CJK SC,sans-serif">企业猫源码</text>
<rect x="3.5" y="17.2" width="12" height=".7" fill="#e3e3e3"/></svg>
<div class="ct" style="left:1266px;top:15px;line-height:20px;font-size:15.5px;color:#666">Admin</div>
<svg style="position:absolute;left:1339.8px;top:16.92px;color:#555;" width="15.67" height="15.67" viewBox="0 0 16 16" fill="currentColor" ><path fill-rule="evenodd" d="M9.13 7.07 L10.6 7.17 L10.6 9.23 L9.13 9.33 L8.84 10.04 L9.81 11.14 L8.34 12.61 L7.24 11.64 L6.53 11.93 L6.43 13.4 L4.37 13.4 L4.27 11.93 L3.56 11.64 L2.46 12.61 L0.99 11.14 L1.96 10.04 L1.67 9.33 L0.2 9.23 L0.2 7.17 L1.67 7.07 L1.96 6.36 L0.99 5.26 L2.46 3.79 L3.56 4.76 L4.27 4.47 L4.37 3 L6.43 3 L6.53 4.47 L7.24 4.76 L8.34 3.79 L9.81 5.26 L8.84 6.36Z M7.3 8.2 A1.9 1.9 0 1 0 3.5 8.2 A1.9 1.9 0 1 0 7.3 8.2Z M14.78 3.57 L15.72 3.61 L15.72 4.99 L14.78 5.03 L14.56 5.47 L15.12 6.23 L14.05 7.09 L13.43 6.38 L12.95 6.49 L12.7 7.4 L11.35 7.09 L11.53 6.16 L11.14 5.86 L10.28 6.23 L9.68 4.99 L10.51 4.55 L10.51 4.05 L9.68 3.61 L10.28 2.37 L11.14 2.74 L11.53 2.44 L11.35 1.51 L12.7 1.2 L12.95 2.11 L13.43 2.22 L14.05 1.51 L15.12 2.37 L14.56 3.13Z M13.7 4.3 A1 1 0 1 0 11.7 4.3 A1 1 0 1 0 13.7 4.3Z M14.78 11.47 L15.72 11.51 L15.72 12.89 L14.78 12.93 L14.56 13.37 L15.12 14.13 L14.05 14.99 L13.43 14.28 L12.95 14.39 L12.7 15.3 L11.35 14.99 L11.53 14.06 L11.14 13.76 L10.28 14.13 L9.68 12.89 L10.51 12.45 L10.51 11.95 L9.68 11.51 L10.28 10.27 L11.14 10.64 L11.53 10.34 L11.35 9.41 L12.7 9.1 L12.95 10.01 L13.43 10.12 L14.05 9.41 L15.12 10.27 L14.56 11.03Z M13.7 12.2 A1 1 0 1 0 11.7 12.2 A1 1 0 1 0 13.7 12.2Z"/></svg>
</div>
<div id="frame"><div class="card" style="left:1px;top:1px;width:431px;height:130px;"><div class="ct" style="left:12px;top:10px;font-size:14px;line-height:20px;color:#444;">用户数量 <span style="font-size:16px">1</span></div><div class="ct" style="right:12px;top:10.5px;font-size:12px;line-height:20px;color:#666;">今日新增用户 0</div><div class="abs" style="left:18px;top:87px;width:395px;height:2px;background:#6f66a0"></div><div class="abs" style="left:12px;top:109px;width:6px;height:6px;border-radius:50%;background:#7569c9"></div><div class="ct" style="left:26px;top:102.5px;font-size:12px;line-height:20px;color:#555;">本周新增用户人数&nbsp;&nbsp;0</div></div>
<div class="card" style="left:454px;top:1px;width:431px;height:130px;"><div class="ct" style="left:12px;top:10px;font-size:14px;line-height:20px;color:#444;">分销商数量 <span style="font-size:16px">0</span></div><div class="ct" style="right:12px;top:10.5px;font-size:12px;line-height:20px;color:#666;">今日新增人数 0</div><div class="abs" style="left:18px;top:87px;width:395px;height:2px;background:#4f89ad"></div><div class="abs" style="left:12px;top:109px;width:6px;height:6px;border-radius:50%;background:#3e8bd5"></div><div class="ct" style="left:26px;top:102.5px;font-size:12px;line-height:20px;color:#555;">本周新增分销商人数&nbsp;&nbsp;0</div></div>
<div class="card" style="left:907px;top:1px;width:431px;height:130px;"><div class="ct" style="left:12px;top:10px;font-size:14px;line-height:20px;color:#444;">分享次数 <span style="font-size:16px">0</span></div><div class="ct" style="right:12px;top:10.5px;font-size:12px;line-height:20px;color:#666;">今日分享次数 0</div><div class="abs" style="left:18px;top:87px;width:395px;height:2px;background:#45a04b"></div><div class="abs" style="left:12px;top:109px;width:6px;height:6px;border-radius:50%;background:#3db43c"></div><div class="ct" style="left:26px;top:102.5px;font-size:12px;line-height:20px;color:#555;">本周新增分享次数&nbsp;&nbsp;0</div></div>
<div class="card" style="left:1px;top:153px;width:885px;height:356px;"><svg class="abs" style="left:0;top:0" width="885" height="356" viewBox="0 0 885 356" font-family="Liberation Sans,Noto Sans CJK SC,sans-serif" font-size="12" fill="#666"><rect x="52.04" y="64" width="23.51" height="235.5" fill="#eeeeee"/><rect x="85.63" y="64" width="23.51" height="235.5" fill="#eeeeee"/><rect x="119.22" y="64" width="23.51" height="235.5" fill="#eeeeee"/><rect x="152.81" y="64" width="23.51" height="235.5" fill="#eeeeee"/><rect x="186.4" y="64" width="23.51" height="235.5" fill="#eeeeee"/><rect x="219.99" y="64" width="23.51" height="235.5" fill="#eeeeee"/><rect x="253.58" y="64" width="23.51" height="235.5" fill="#eeeeee"/><rect x="287.17" y="64" width="23.51" height="235.5" fill="#eeeeee"/><rect x="320.76" y="64" width="23.51" height="235.5" fill="#eeeeee"/><rect x="354.35" y="64" width="23.51" height="235.5" fill="#eeeeee"/><rect x="387.94" y="64" width="23.51" height="235.5" fill="#eeeeee"/><rect x="421.53" y="64" width="23.51" height="235.5" fill="#eeeeee"/><rect x="455.12" y="64" width="23.51" height="235.5" fill="#eeeeee"/><rect x="488.71" y="64" width="23.51" height="235.5" fill="#eeeeee"/><rect x="522.3" y="64" width="23.51" height="235.5" fill="#eeeeee"/><rect x="555.89" y="64" width="23.51" height="235.5" fill="#eeeeee"/><rect x="589.48" y="64" width="23.51" height="235.5" fill="#eeeeee"/><rect x="623.07" y="64" width="23.51" height="235.5" fill="#eeeeee"/><rect x="656.66" y="64" width="23.51" height="235.5" fill="#eeeeee"/><rect x="690.25" y="64" width="23.51" height="235.5" fill="#eeeeee"/><rect x="723.84" y="64" width="23.51" height="235.5" fill="#eeeeee"/><rect x="757.43" y="64" width="23.51" height="235.5" fill="#eeeeee"/><rect x="791.02" y="64" width="23.51" height="235.5" fill="#eeeeee"/><rect x="824.61" y="64" width="23.51" height="235.5" fill="#eeeeee"/><text x="34" y="67.3" text-anchor="end">1</text><text x="34" y="114.49999999999999" text-anchor="end">0.8</text><text x="34" y="161.60000000000002" text-anchor="end">0.6</text><text x="34" y="208.8" text-anchor="end">0.4</text><text x="34" y="255.90000000000003" text-anchor="end">0.2</text><text x="34" y="303.09999999999997" text-anchor="end">0</text><text x="63.8" y="322.3" text-anchor="middle">15 00:00</text><text x="130.98" y="322.3" text-anchor="middle">15 02:00</text><text x="198.16" y="322.3" text-anchor="middle">15 04:00</text><text x="265.34" y="322.3" text-anchor="middle">15 06:00</text><text x="332.52" y="322.3" text-anchor="middle">15 08:00</text><text x="399.7" y="322.3" text-anchor="middle">15 10:00</text><text x="466.88" y="322.3" text-anchor="middle">15 12:00</text><text x="534.05" y="322.3" text-anchor="middle">15 14:00</text><text x="601.24" y="322.3" text-anchor="middle">15 16:00</text><text x="668.42" y="322.3" text-anchor="middle">15 18:00</text><text x="735.6" y="322.3" text-anchor="middle">15 20:00</text><text x="802.77" y="322.3" text-anchor="middle">15 22:00</text></svg><div class="ct" style="left:12px;top:18px;font-size:14px;line-height:20px;color:#333;font-weight:700">订单数</div><div class="ct" style="left:74px;top:18px;font-size:14px;line-height:20px;color:#999;">支付订单</div><div class="ct" style="left:150px;top:18px;font-size:14px;line-height:20px;color:#999;">支付金额</div><div class="abs" style="left:473px;top:12px;width:400px;height:32px;border:1px solid #dddfe3;border-radius:4px;background:#fff"></div><svg class="abs" style="left:485px;top:22.5px" width="11" height="11" viewBox="0 0 11 11"><circle cx="5.5" cy="5.5" r="4.7" fill="none" stroke="#c0c4cc" stroke-width="1"/><path d="M5.5 2.8v2.9h2.3" fill="none" stroke="#c0c4cc" stroke-width="1"/></svg><div class="ct" style="left:502px;top:18px;font-size:15px;line-height:20px;color:#555;">2025-01-15 00:00:00</div><div class="ct" style="left:666px;top:18px;font-size:14px;line-height:20px;color:#333;">至</div><div class="ct" style="left:705px;top:18px;font-size:15px;line-height:20px;color:#555;">2025-01-15 23:59:59</div></div>
<div class="card" style="left:908px;top:153px;width:204px;height:104px;"><div class="abs" style="left:12px;top:12px;width:24px;height:24px;border-radius:7px;background:#e6e2fb"><svg class="abs" style="left:6px;top:6px" width="12" height="12" viewBox="0 0 12 12"><rect x="0" y="0" width="12" height="12" rx="3" fill="#8d82ea"/><rect x="2.7" y="4.5" width="1.3" height="5" rx=".6" fill="#e9e6fd"/><rect x="5.35" y="2.6" width="1.3" height="6.9" rx=".6" fill="#e9e6fd"/><rect x="8" y="5.5" width="1.3" height="4" rx=".6" fill="#e9e6fd"/></svg></div><div class="ct" style="left:148px;top:14.5px;font-size:12px;line-height:20px;color:#999;">详情</div><svg class="abs" style="left:180px;top:20px" width="6" height="9" viewBox="0 0 6 9"><path d="M.8.8L4.8 4.5.8 8.2" fill="none" stroke="#aaa" stroke-width="1"/></svg><div class="ct" style="left:12px;top:44px;font-size:24px;line-height:28px;color:#333;">0</div><div class="ct" style="left:12px;top:71.5px;font-size:12px;line-height:20px;color:#999;">订单数</div><svg class="abs" style="left:180.5px;top:76px" width="11" height="11" viewBox="0 0 11 11"><circle cx="5.5" cy="5.5" r="4.6" fill="#fffcf5" stroke="#f1d2a3" stroke-width="1"/><path d="M5.5 3.3v2.5M5.5 7.2v.7" stroke="#f3dab4" stroke-width="1"/></svg></div>
<div class="card" style="left:1134px;top:153px;width:204px;height:104px;"><div class="abs" style="left:12px;top:12px;width:24px;height:24px;border-radius:7px;background:#e6e2fb"><svg class="abs" style="left:6px;top:6px" width="12" height="12" viewBox="0 0 12 12"><path d="M1.5 3.2 L9 .8 L10 3.2z" fill="#b9b1f5"/><rect x="0.5" y="3" width="11" height="8.5" rx="1.8" fill="#8d82ea"/><rect x="7.5" y="6" width="4.5" height="2.6" rx="1" fill="#e9e6fd"/></svg></div><div class="ct" style="left:148px;top:14.5px;font-size:12px;line-height:20px;color:#999;">详情</div><svg class="abs" style="left:180px;top:20px" width="6" height="9" viewBox="0 0 6 9"><path d="M.8.8L4.8 4.5.8 8.2" fill="none" stroke="#aaa" stroke-width="1"/></svg><div class="ct" style="left:12px;top:44px;font-size:24px;line-height:28px;color:#333;">0</div><div class="ct" style="left:12px;top:71.5px;font-size:12px;line-height:20px;color:#999;">支付金额</div><svg class="abs" style="left:180.5px;top:76px" width="11" height="11" viewBox="0 0 11 11"><circle cx="5.5" cy="5.5" r="4.6" fill="#fffcf5" stroke="#f1d2a3" stroke-width="1"/><path d="M5.5 3.3v2.5M5.5 7.2v.7" stroke="#f3dab4" stroke-width="1"/></svg></div>
<div class="card" style="left:908px;top:279px;width:204px;height:104px;"><div class="abs" style="left:12px;top:12px;width:24px;height:24px;border-radius:7px;background:#e6e2fb"><svg class="abs" style="left:6px;top:6px" width="12" height="12" viewBox="0 0 12 12"><path d="M1 2.2C1 1.2 1.8.5 2.7.5H7.5L11 4V9.8c0 1-.8 1.7-1.7 1.7H2.7C1.8 11.5 1 10.8 1 9.8z" fill="#8d82ea"/><path d="M7.5.5V4H11z" fill="#b9b1f5"/><rect x="3" y="5.5" width="5" height="1.1" rx=".5" fill="#e9e6fd"/><rect x="3" y="8" width="3.5" height="1.1" rx=".5" fill="#e9e6fd"/></svg></div><div class="ct" style="left:148px;top:14.5px;font-size:12px;line-height:20px;color:#999;">详情</div><svg class="abs" style="left:180px;top:20px" width="6" height="9" viewBox="0 0 6 9"><path d="M.8.8L4.8 4.5.8 8.2" fill="none" stroke="#aaa" stroke-width="1"/></svg><div class="ct" style="left:12px;top:44px;font-size:24px;line-height:28px;color:#333;">0</div><div class="ct" style="left:12px;top:71.5px;font-size:12px;line-height:20px;color:#999;">支付订单</div><svg class="abs" style="left:180.5px;top:76px" width="11" height="11" viewBox="0 0 11 11"><circle cx="5.5" cy="5.5" r="4.6" fill="#fffcf5" stroke="#f1d2a3" stroke-width="1"/><path d="M5.5 3.3v2.5M5.5 7.2v.7" stroke="#f3dab4" stroke-width="1"/></svg></div>
<div class="card" style="left:1134px;top:279px;width:204px;height:104px;"><div class="abs" style="left:12px;top:12px;width:24px;height:24px;border-radius:7px;background:#e6e2fb"><svg class="abs" style="left:6px;top:6px" width="12" height="12" viewBox="0 0 12 12"><rect x="0.5" y="1.5" width="11" height="10" rx="2" fill="#8d82ea"/><rect x="0.5" y="1.5" width="11" height="3.2" rx="1.5" fill="#b9b1f5"/><rect x="2.8" y=".3" width="1.2" height="2.6" rx=".6" fill="#8d82ea"/><rect x="8" y=".3" width="1.2" height="2.6" rx=".6" fill="#8d82ea"/><rect x="2.5" y="7.8" width="4" height="1.1" rx=".5" fill="#e9e6fd"/></svg></div><div class="ct" style="left:148px;top:14.5px;font-size:12px;line-height:20px;color:#999;">详情</div><svg class="abs" style="left:180px;top:20px" width="6" height="9" viewBox="0 0 6 9"><path d="M.8.8L4.8 4.5.8 8.2" fill="none" stroke="#aaa" stroke-width="1"/></svg><div class="ct" style="left:12px;top:44px;font-size:24px;line-height:28px;color:#333;">0</div><div class="ct" style="left:12px;top:71.5px;font-size:12px;line-height:20px;color:#999;">待发货订单</div><svg class="abs" style="left:180.5px;top:76px" width="11" height="11" viewBox="0 0 11 11"><circle cx="5.5" cy="5.5" r="4.6" fill="#fffcf5" stroke="#f1d2a3" stroke-width="1"/><path d="M5.5 3.3v2.5M5.5 7.2v.7" stroke="#f3dab4" stroke-width="1"/></svg></div>
<div class="card" style="left:908px;top:405px;width:204px;height:104px;"><div class="abs" style="left:12px;top:12px;width:24px;height:24px;border-radius:7px;background:#e6e2fb"><svg class="abs" style="left:6px;top:6px" width="12" height="12" viewBox="0 0 12 12"><path d="M6 .3L11 2v4.2c0 2.8-2 4.6-5 5.6C3 10.8 1 9 1 6.2V2z" fill="#8d82ea"/><rect x="4" y="4" width="4" height="1" rx=".5" fill="#e9e6fd"/><rect x="4" y="6" width="4" height="1" rx=".5" fill="#e9e6fd"/><rect x="5.5" y="4" width="1" height="4.5" rx=".5" fill="#e9e6fd"/></svg></div><div class="ct" style="left:148px;top:14.5px;font-size:12px;line-height:20px;color:#999;">详情</div><svg class="abs" style="left:180px;top:20px" width="6" height="9" viewBox="0 0 6 9"><path d="M.8.8L4.8 4.5.8 8.2" fill="none" stroke="#aaa" stroke-width="1"/></svg><div class="ct" style="left:12px;top:44px;font-size:24px;line-height:28px;color:#333;">0</div><div class="ct" style="left:12px;top:71.5px;font-size:12px;line-height:20px;color:#999;">售后维权</div><svg class="abs" style="left:180.5px;top:76px" width="11" height="11" viewBox="0 0 11 11"><circle cx="5.5" cy="5.5" r="4.6" fill="#fffcf5" stroke="#f1d2a3" stroke-width="1"/><path d="M5.5 3.3v2.5M5.5 7.2v.7" stroke="#f3dab4" stroke-width="1"/></svg></div>
<div class="card" style="left:1134px;top:405px;width:204px;height:104px;"><div class="abs" style="left:12px;top:12px;width:24px;height:24px;border-radius:7px;background:#e6e2fb"><svg class="abs" style="left:6px;top:6px" width="12" height="12" viewBox="0 0 12 12"><circle cx="7" cy="6" r="5" fill="#8d82ea"/><path d="M1.8 2.5A6 6 0 0 0 1.8 9.5" stroke="#b9b1f5" stroke-width="1.2" fill="none"/><circle cx="7" cy="6" r="1.8" fill="#d6d1fa"/></svg></div><div class="ct" style="left:148px;top:14.5px;font-size:12px;line-height:20px;color:#999;">详情</div><svg class="abs" style="left:180px;top:20px" width="6" height="9" viewBox="0 0 6 9"><path d="M.8.8L4.8 4.5.8 8.2" fill="none" stroke="#aaa" stroke-width="1"/></svg><div class="ct" style="left:12px;top:44px;font-size:24px;line-height:28px;color:#333;">0</div><div class="ct" style="left:12px;top:71.5px;font-size:12px;line-height:20px;color:#999;">退款订单</div><svg class="abs" style="left:180.5px;top:76px" width="11" height="11" viewBox="0 0 11 11"><circle cx="5.5" cy="5.5" r="4.6" fill="#fffcf5" stroke="#f1d2a3" stroke-width="1"/><path d="M5.5 3.3v2.5M5.5 7.2v.7" stroke="#f3dab4" stroke-width="1"/></svg></div>
<div class="card" style="left:1px;top:531px;width:658px;height:320px;"><div class="ct" style="left:12px;top:10px;font-size:14px;line-height:20px;color:#444;">销量榜</div><div class="abs" style="left:12px;top:44px;width:634px;height:39px;background:#f5f5f5"></div><div class="ct" style="left:28px;top:54px;font-size:14px;line-height:20px;color:#555;">排名</div><div class="ct" style="left:84px;top:54px;font-size:14px;line-height:20px;color:#555;">名称</div><div class="ct" style="left:558px;top:54px;font-size:14px;line-height:20px;color:#555;">销量</div><div class="abs" style="left:12px;top:82.5px;width:634px;height:39.2px;background:#fff"></div><div class="abs" style="left:31px;top:92.7px;width:22px;height:22px"><svg class="abs" style="left:0;top:0" width="22" height="22" viewBox="0 0 22 22"><path d="M11 2.4 L18.89 6.7 L18.89 15.3 L11 19.6 L3.11 15.3 L3.11 6.7Z" fill="#f2bf2c" stroke="#f2bf2c" stroke-width="1.5" stroke-linejoin="round"/><path d="M11 5 L16.51 8 L16.51 14 L11 17 L5.49 14 L5.49 8Z" fill="#f8d659" stroke="#f8d659" stroke-width="1" stroke-linejoin="round"/><path d="M8.3 9.2l1.5 1.6L11 8.6l1.2 2.2 1.5-1.6-.5 3.8H8.8z" fill="#fbe9a6"/></svg></div><div class="abs" style="left:84px;top:93px;width:20px;height:20px;border-radius:4px;background:#919ec3"><div class="abs" style="left:8px;top:9px;width:4px;height:1.5px;background:rgba(255,255,255,.45)"></div></div><div class="ct" style="left:114px;top:93.49999999999996px;font-size:14px;line-height:20px;color:#444;">刀锋男鞋夏季透气防臭飞织运动鞋男潮流百搭休闲网面跑步鞋大码...</div><div class="ct" style="left:558px;top:93.49999999999996px;font-size:14.5px;line-height:20px;color:#444;">62</div><div class="abs" style="left:12px;top:121.7px;width:634px;height:39.2px;background:#fafafa"></div><div class="abs" style="left:31px;top:131.9px;width:22px;height:22px"><svg class="abs" style="left:0;top:0" width="22" height="22" viewBox="0 0 22 22"><path d="M11 2.4 L18.89 6.7 L18.89 15.3 L11 19.6 L3.11 15.3 L3.11 6.7Z" fill="#aab8c9" stroke="#aab8c9" stroke-width="1.5" stroke-linejoin="round"/><path d="M11 5 L16.51 8 L16.51 14 L11 17 L5.49 14 L5.49 8Z" fill="#dbe8f6" stroke="#dbe8f6" stroke-width="1" stroke-linejoin="round"/><path d="M8.3 9.2l1.5 1.6L11 8.6l1.2 2.2 1.5-1.6-.5 3.8H8.8z" fill="#b9c9dc"/></svg></div><div class="abs" style="left:84px;top:133px;width:20px;height:20px;border-radius:4px;background:#d4d4d2"><div class="abs" style="left:8px;top:9px;width:4px;height:1.5px;background:rgba(255,255,255,.45)"></div></div><div class="ct" style="left:114px;top:132.09999999999997px;font-size:14px;line-height:20px;color:#444;">中国风龙图案棒球帽男潮牌休闲鸭舌帽女潮流百搭防晒遮阳太阳帽子</div><div class="ct" style="left:558px;top:132.09999999999997px;font-size:14.5px;line-height:20px;color:#444;">42</div><div class="abs" style="left:12px;top:160.9px;width:634px;height:39.2px;background:#fff"></div><div class="abs" style="left:31px;top:172px;width:22px;height:22px"><svg class="abs" style="left:0;top:0" width="22" height="22" viewBox="0 0 22 22"><path d="M11 2.4 L18.89 6.7 L18.89 15.3 L11 19.6 L3.11 15.3 L3.11 6.7Z" fill="#eea64c" stroke="#eea64c" stroke-width="1.5" stroke-linejoin="round"/><path d="M11 5 L16.51 8 L16.51 14 L11 17 L5.49 14 L5.49 8Z" fill="#f6c78f" stroke="#f6c78f" stroke-width="1" stroke-linejoin="round"/><path d="M8.3 9.2l1.5 1.6L11 8.6l1.2 2.2 1.5-1.6-.5 3.8H8.8z" fill="#f0b070"/></svg></div><div class="abs" style="left:84px;top:171px;width:20px;height:20px;border-radius:4px;background:#e2cfcb"><div class="abs" style="left:8px;top:9px;width:4px;height:1.5px;background:rgba(255,255,255,.45)"></div></div><div class="ct" style="left:114px;top:172.2px;font-size:14px;line-height:20px;color:#444;">森马国潮短裤男夏季潮印花大码中国风裤子休闲嘻哈潮流宽松五分裤</div><div class="ct" style="left:558px;top:172.2px;font-size:14.5px;line-height:20px;color:#444;">31</div><div class="abs" style="left:12px;top:200.1px;width:634px;height:39.2px;background:#fafafa"></div><div class="abs" style="left:31px;top:210.6px;width:22px;height:22px"><svg class="abs" style="left:0;top:0" width="22" height="22" viewBox="0 0 22 22"><path d="M11 2.4 L18.89 6.7 L18.89 15.3 L11 19.6 L3.11 15.3 L3.11 6.7Z" fill="#dadada" stroke="#dadada" stroke-width="1.5" stroke-linejoin="round"/><text x="11" y="15.2" text-anchor="middle" font-size="12" font-weight="700" fill="#f4f4f4" font-family="Liberation Sans,sans-serif">4</text></svg></div><div class="abs" style="left:84px;top:210px;width:20px;height:20px;border-radius:4px;background:#9ab89a"><div class="abs" style="left:8px;top:9px;width:4px;height:1.5px;background:rgba(255,255,255,.45)"></div></div><div class="ct" style="left:114px;top:210.49999999999994px;font-size:14px;line-height:20px;color:#444;">猫人男士睡衣男夏季100%纯棉薄款圆领套头短袖套装男ins潮休闲...</div><div class="ct" style="left:558px;top:210.49999999999994px;font-size:14.5px;line-height:20px;color:#444;">13</div><div class="abs" style="left:12px;top:239.3px;width:634px;height:39.2px;background:#fff"></div><div class="abs" style="left:31px;top:250px;width:22px;height:22px"><svg class="abs" style="left:0;top:0" width="22" height="22" viewBox="0 0 22 22"><path d="M11 2.4 L18.89 6.7 L18.89 15.3 L11 19.6 L3.11 15.3 L3.11 6.7Z" fill="#dadada" stroke="#dadada" stroke-width="1.5" stroke-linejoin="round"/><text x="11" y="15.2" text-anchor="middle" font-size="12" font-weight="700" fill="#f4f4f4" font-family="Liberation Sans,sans-serif">5</text></svg></div><div class="abs" style="left:84px;top:249px;width:20px;height:20px;border-radius:4px;background:#8992a3"><div class="abs" style="left:8px;top:9px;width:4px;height:1.5px;background:rgba(255,255,255,.45)"></div></div><div class="ct" style="left:114px;top:249.8px;font-size:14px;line-height:20px;color:#444;">嘻哈休闲运动套装男士夏季潮牌ins胖子大码青少年男装短裤短袖t恤</div><div class="ct" style="left:558px;top:249.8px;font-size:14.5px;line-height:20px;color:#444;">9</div></div>
<div class="card" style="left:681px;top:531px;width:658px;height:320px;"><div class="ct" style="left:12px;top:10px;font-size:14px;line-height:20px;color:#444;">热搜榜</div><div class="abs" style="left:12px;top:44px;width:417px;height:39px;background:#f5f5f5"></div><div class="abs" style="left:12px;top:83px;width:417px;height:61px;background:#fff"></div><div class="ct" style="left:28px;top:54px;font-size:14px;line-height:20px;color:#555;">排名</div><div class="ct" style="left:84px;top:54px;font-size:14px;line-height:20px;color:#555;">名称</div><div class="ct" style="left:341px;top:54px;font-size:14px;line-height:20px;color:#555;">搜索量(次)</div><div class="ct" style="left:192px;top:103px;font-size:14px;line-height:20px;color:#555;">暂无数据</div><div class="abs" style="left:460px;top:54px;width:172px;height:172px;border-radius:50%;border:36px solid #d4d4d4"></div></div>
<div class="abs" style="left:1332px;top:1px;width:6px;height:830px;border-radius:3px;background:#c9c9c9"></div></div>
<div class="abs" style="left:1540px;top:789px;width:40px;height:40px;border-radius:50%;background:#fff;box-shadow:0 0 5px rgba(0,0,0,.07)"><svg style="position:absolute;left:11.43px;top:11.02px;color:#7b5cf5;" width="17.73" height="17.73" viewBox="0 0 16 16" fill="currentColor" ><path d="M8 1.2c-3 0-4.8 2.2-4.8 5v3.2c0 1-.5 1.8-1.2 2.4v.8h12v-.8c-.7-.6-1.2-1.4-1.2-2.4V6.2c0-2.8-1.8-5-4.8-5z"/><rect x="6.2" y="13.6" width="3.6" height="1.4" rx=".7"/></svg></div>
<div class="abs" style="left:1372px;top:822px;width:228px;height:76.5px;background:linear-gradient(90deg,#5fe9d0 0%,#7df0b0 45%,#b4f878 100%);overflow:hidden">
<div class="abs" id="wm1" style="left:0;top:9px;width:228px;text-align:center;font-family:'Liberation Sans','Noto Sans CJK SC',sans-serif;font-weight:900;font-size:29px;line-height:40px;white-space:nowrap"><span style="display:inline-block;transform:scaleX(1.25) skewX(-6deg);background:linear-gradient(180deg,#ffa030 22%,#f03cc8 45%,#7a3cf0 62%,#2a78f0 76%,#20d0d0 92%);-webkit-background-clip:text;background-clip:text;color:transparent">云创项目库</span></div>
<div class="abs" id="wm2" style="left:0;top:50px;width:234px;text-align:center;font-family:'Liberation Serif','Noto Serif CJK SC',serif;font-weight:700;font-size:14.7px;line-height:20px;white-space:nowrap"><span style="background:linear-gradient(90deg,#8d8ce0 0%,#c9a0d8 45%,#f2b8b8 75%,#f5dcb0 100%);-webkit-background-clip:text;background-clip:text;color:transparent">专注分享互联网创业项目</span></div>
</div>
</div>
</body>
</html>
